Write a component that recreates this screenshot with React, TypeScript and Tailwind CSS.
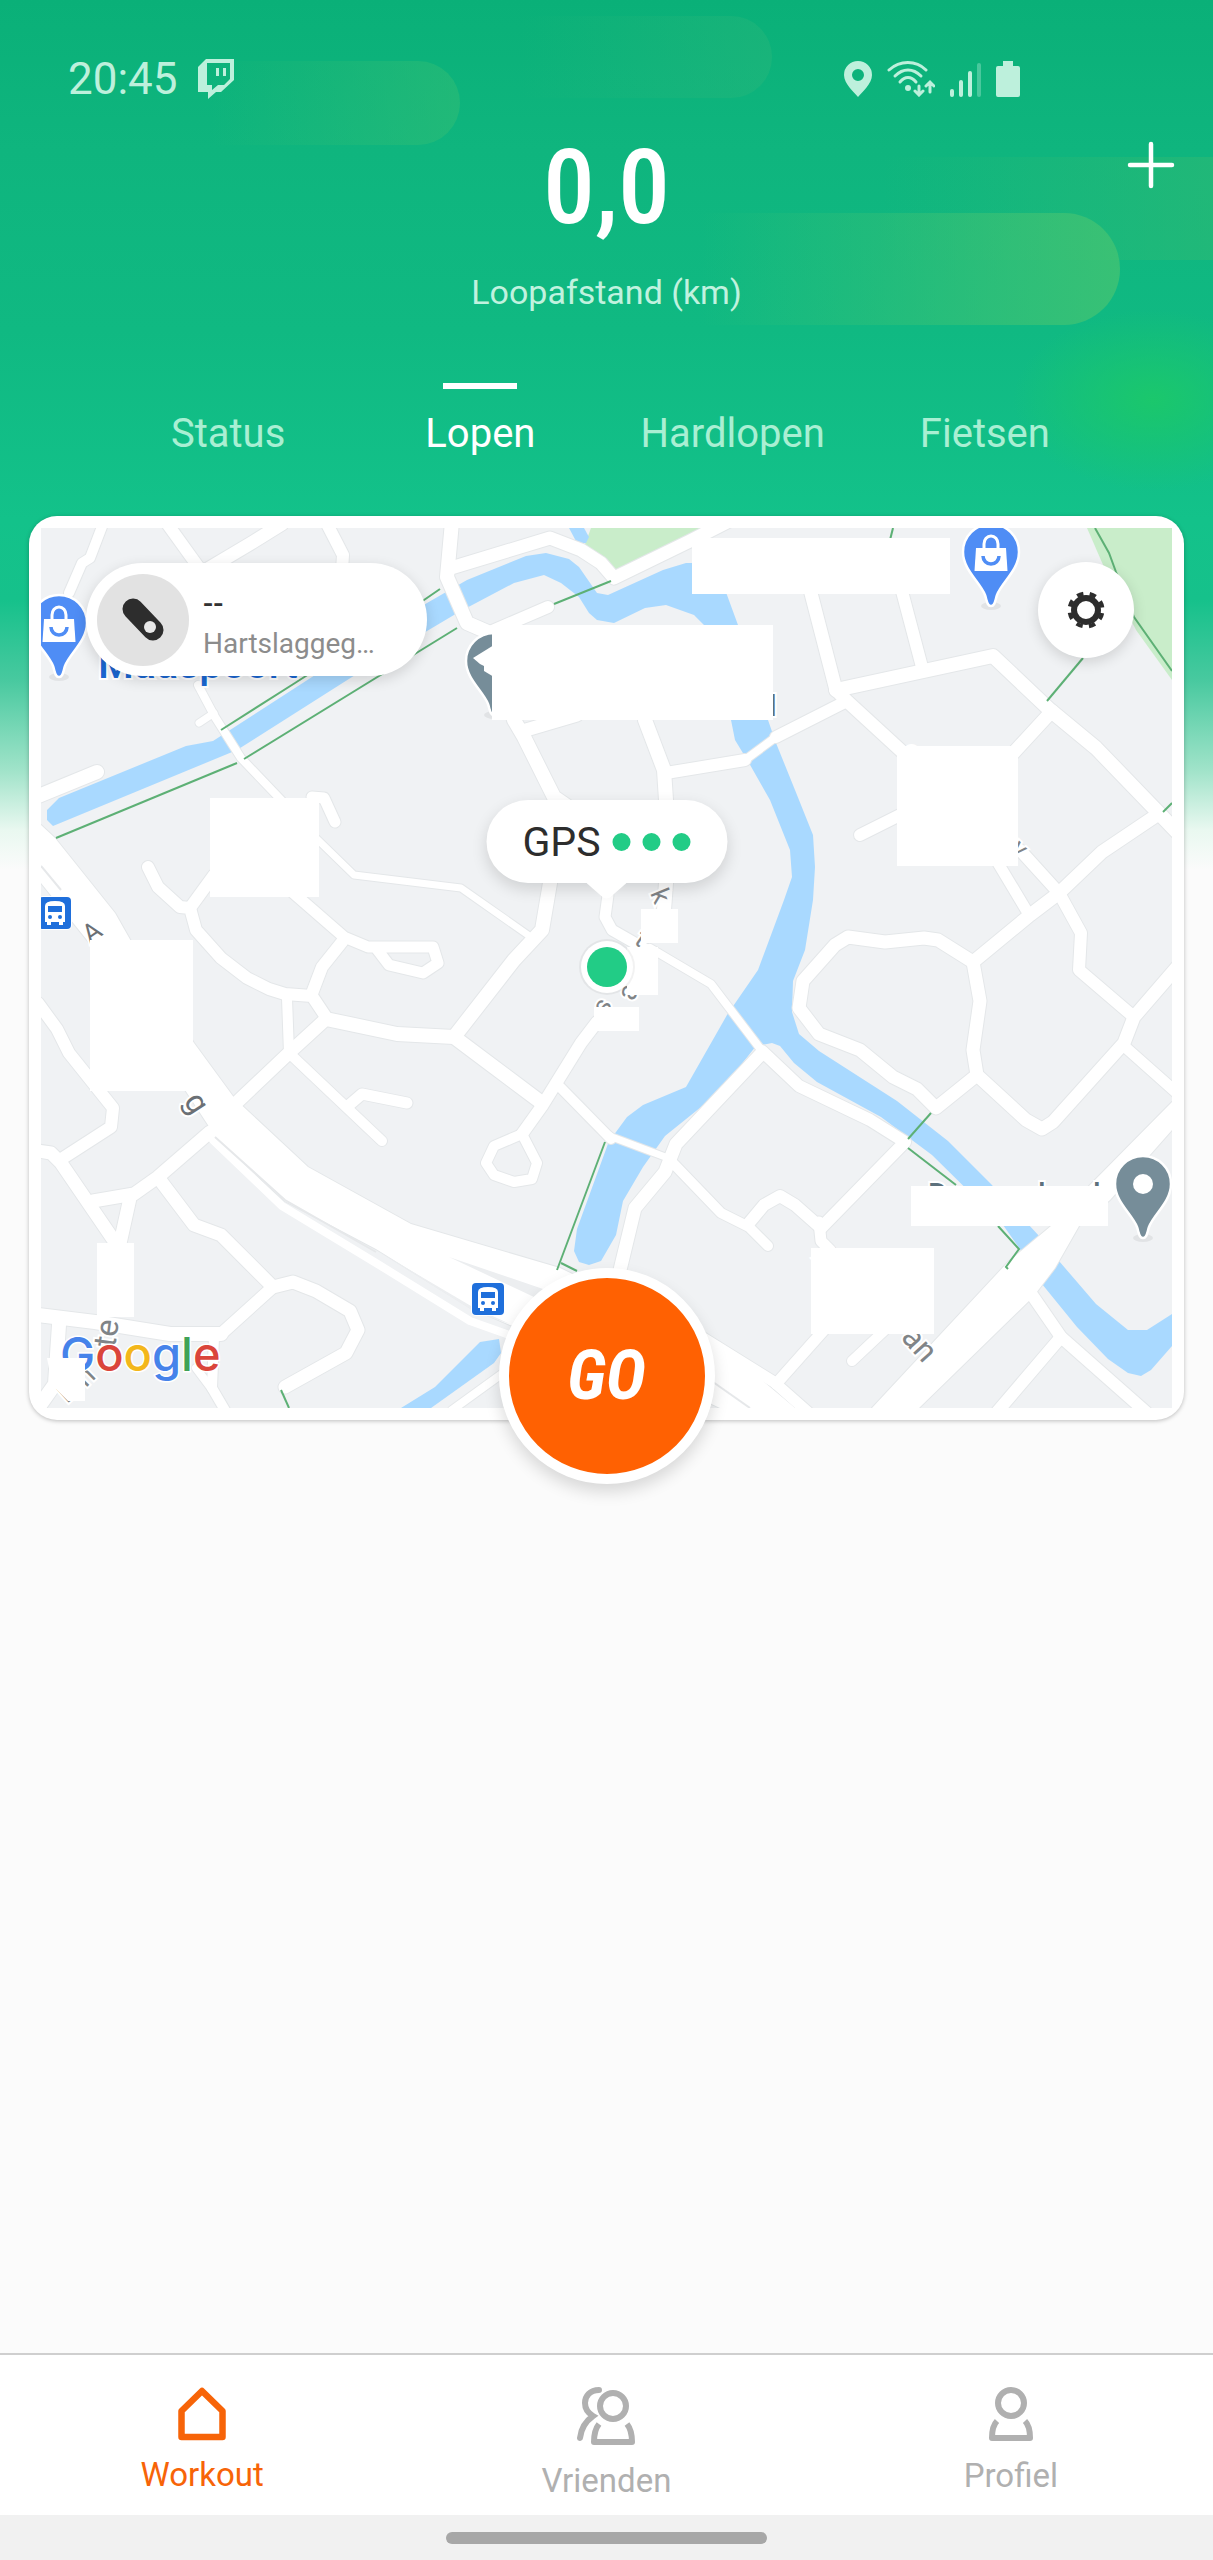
import React, { useState } from 'react'

const TABS = ['Status', 'Lopen', 'Hardlopen', 'Fietsen']

type Road = { d: string; w: number }

const WATER = [
  'M47 810L59 798L186 746L213 741L312 677L427 603L467 580L526 556L546 553L569 559L579 567L597 593L608 595L663 570L686 563L715 563L727 595L738 625L768 720L776 743L795 790L813 835L815 867L813 900L805 950L793 981L792 1012L799 1034L819 1051L897 1101L948 1141L991 1184L1040 1237L1059 1261L1096 1304L1128 1330H1147L1172 1314V1346L1151 1370L1141 1376L1128 1373L1108 1359L1077 1327L1042 1284L1020 1249L1003 1225L932 1155L881 1117L817 1082L794 1063L780 1046L772 1043L756 1046L737 1070L706 1103L665 1136L643 1167L623 1201L616 1235L601 1261L589 1265L579 1262L574 1251L577 1229L609 1141L616 1132L627 1117L643 1105L686 1087L727 1015L758 970L784 900L792 877L790 850L770 800L749 763L735 740L731 720L704 625L694 615L666 605L645 608L614 623L597 620L589 613L579 597L561 583L544 575L514 583L459 612L427 631L352 677L237 750L53 826L47 820Z',
  'M401 1408L435 1387L480 1342L499 1339L501 1353L494 1363L431 1408Z',
  'M569 528H584L589 537L586 543H577Z'
]

const PARKS = ['M591 528H717L614 573L605 560L584 547Z', 'M1087 528H1172V680L1136 630L1104 567Z']

const PATHS = [
  'M1095 528L1109 553L1116 572L1134 617L1172 671',
  'M893 528L890 540',
  'M1083 658L1047 701',
  'M1172 803L1163 812',
  'M554 604L611 581',
  'M440 589L424 600L295 683L221 730',
  'M457 628L244 759',
  'M237 763L56 838',
  'M605 1142L557 1270',
  'M561 1263L577 1271',
  'M281 1390L289 1408',
  'M931 1113L908 1139',
  'M908 1148L956 1185',
  'M998 1226L1019 1249L1006 1267L1008 1269'
]

const ROADS: Road[] = [
  { d: 'M103 524L90 558L82 563L69 593', w: 10 },
  { d: 'M166 522L202 572', w: 12 },
  { d: 'M282 524L253 542L206 570', w: 13 },
  { d: 'M326 522L343 555L342 570', w: 12 },
  { d: 'M198 685L215 717L241 758L285 804', w: 8 },
  { d: 'M199 723L214 713', w: 7 },
  { d: 'M452 522L447 577L467 623L490 633L514 720L524 737L554 797L567 806', w: 14 },
  { d: 'M550 883L542 930L514 960L454 1037', w: 14 },
  { d: 'M451 568L550 538L581 550L601 563L614 578L690 541L735 518', w: 13 },
  { d: 'M548 607L490 632', w: 12 },
  { d: 'M36 797L97 772', w: 14 },
  { d: 'M148 867L158 887L180 907L190 908L196 930L221 958L247 978L269 989L285 994L312 996L326 1017', w: 12 },
  { d: 'M190 908L214 875', w: 12 },
  { d: 'M290 890L344 937L368 947H433L438 963L423 973L389 965L376 948', w: 11 },
  { d: 'M342 942L322 967L311 996', w: 12 },
  { d: 'M316 838L354 875L461 888L528 935', w: 7 },
  { d: 'M312 797L324 798L335 822', w: 11 },
  { d: 'M526 730L577 715', w: 13 },
  { d: 'M645 720L664 770L666 800V883L664 910', w: 14 },
  { d: 'M666 773L745 760', w: 12 },
  { d: 'M745 760L776 737', w: 8 },
  { d: 'M776 737L845 702', w: 12 },
  { d: 'M805 570L836 690L848 702L909 758', w: 13 },
  { d: 'M899 580L922 667', w: 12 },
  { d: 'M836 690L993 656L1050 710L1096 748L1180 835', w: 14 },
  { d: 'M1052 711L1005 762', w: 13 },
  {
    d: 'M1157 815L1102 852L1059 893L1030 915L973 962L938 940L924 938L885 942L848 937L835 945L803 981L799 1008L819 1034L860 1050L893 1077L917 1089L936 1108L977 1075',
    w: 13
  },
  { d: 'M973 962L980 1001L973 1050L977 1075L1026 1120L1042 1129L1053 1122L1124 1043L1134 1017L1178 966', w: 13 },
  { d: 'M1134 1017L1079 970L1081 933L1059 893L1020 850', w: 12 },
  { d: 'M995 858L1028 913', w: 11 },
  { d: 'M900 815L860 835', w: 12 },
  { d: 'M1124 1046L1178 1094', w: 11 },
  { d: 'M1030 1292L1061 1337L1146 1412', w: 12 },
  { d: 'M1061 1337L997 1412', w: 12 },
  { d: 'M824 1330L776 1384', w: 11 },
  { d: 'M852 1361L885 1330', w: 10 },
  { d: 'M700 1336L774 1382L808 1412', w: 11 },
  { d: 'M762 1051L799 1086L870 1120L905 1142L821 1228L795 1205L780 1196L764 1205L749 1223', w: 12 },
  { d: 'M670 1160L721 1213L749 1227L768 1246', w: 10 },
  { d: 'M819 1222L821 1241L830 1250', w: 11 },
  { d: 'M762 1053L676 1144L665 1172L635 1208L620 1270', w: 13 },
  { d: 'M600 1129L612 1137L668 1158', w: 7 },
  { d: 'M650 948L711 984L762 1051', w: 8 },
  { d: 'M608 895L605 917L612 930L647 950', w: 11 },
  { d: 'M326 1019L397 1034L454 1037L542 1103', w: 14 },
  { d: 'M326 1019L291 1051L233 1106', w: 13 },
  { d: 'M287 998L289 1053L382 1141', w: 10 },
  { d: 'M348 1106L362 1094L407 1103', w: 11 },
  { d: 'M597 1022L581 1043L542 1106L522 1134', w: 12 },
  { d: 'M522 1134L494 1146L486 1163L494 1175L514 1182L532 1179L537 1163L522 1134', w: 10 },
  { d: 'M560 1087L611 1139', w: 10 },
  { d: 'M38 1003L57 1029L69 1053L113 1108L111 1127L63 1158', w: 12 },
  { d: 'M38 1151L51 1153L61 1163L117 1245', w: 13 },
  { d: 'M210 1132L158 1177L134 1194L93 1201', w: 13 },
  { d: 'M130 1198L119 1248', w: 13 },
  {
    d: 'M160 1180L194 1225L221 1235L273 1287L293 1282L316 1291L350 1311L358 1330L346 1353L285 1387',
    w: 13
  },
  { d: 'M273 1287L221 1334', w: 12 },
  { d: 'M38 1315L95 1322L170 1334H221', w: 14 },
  { d: 'M59 1325L55 1384L38 1408', w: 14 },
  { d: 'M214 1337L212 1388L226 1412', w: 10 },
  { d: 'M196 1368L214 1392', w: 8 },
  { d: 'M452 1410L510 1368', w: 8 }
]

const HIGHWAYS = [
  'M41 825L55 838L115 913L132 943L194 1043L235 1099L308 1167L411 1224L560 1268L720 1345L795 1408H720L640 1370L510 1325L471 1308L376 1249L285 1201L213 1136L208 1125L87 940L41 883Z',
  'M1172 1102V1130L1110 1200L1079 1226L1055 1268L1033 1297L919 1408H872L1008 1262L1051 1226L1090 1185Z'
]

// x, y, width, height of the blanked labels
const BLANKS = [
  [492, 625, 281, 95],
  [692, 538, 258, 56],
  [210, 798, 109, 99],
  [90, 940, 103, 151],
  [897, 746, 121, 120],
  [641, 909, 37, 34],
  [627, 947, 31, 48],
  [594, 1007, 45, 24],
  [97, 1243, 37, 74],
  [911, 1186, 197, 40],
  [811, 1248, 123, 86]
]

function Pin({ x, y, color, children }: { x: number; y: number; color: string; children?: React.ReactNode }) {
  return (
    <g transform={`translate(${x} ${y})`}>
      <ellipse cx="0" cy="54" rx="10" ry="4" fill="#000" opacity="0.06" />
      <path
        d="M0 54C-4 54 -4 49 -6 43C-11 30 -28 18 -28 0A28 28 0 0 1 28 0C28 18 11 30 6 43C4 49 4 54 0 54Z"
        fill={color}
        stroke="#fff"
        strokeWidth="2.5"
      />
      {children}
    </g>
  )
}

function Bag() {
  return (
    <g>
      <path d="M-15 -4H15L16.5 19H-16.5Z" fill="#fff" />
      <path d="M-7 -3V-8A7 8 0 0 1 7 -8V-3" fill="none" stroke="#fff" strokeWidth="3" />
      <path d="M-8 4A8 8 0 0 0 8 4" fill="none" stroke="#4f8df5" strokeWidth="3.5" />
    </g>
  )
}

function BusStop({ x, y }: { x: number; y: number }) {
  return (
    <g transform={`translate(${x} ${y})`}>
      <rect x="-1" y="-1" width="34" height="34" rx="5" fill="#fff" />
      <rect width="32" height="32" rx="4" fill="#1f6fdb" />
      <path d="M6 9Q6 4 16 4Q26 4 26 9V25H24V28H20V25H12V28H8V25H6Z" fill="#fff" />
      <rect x="9" y="9" width="14" height="6" fill="#1f6fdb" />
      <circle cx="11" cy="20" r="2" fill="#1f6fdb" />
      <circle cx="21" cy="20" r="2" fill="#1f6fdb" />
    </g>
  )
}

function StreetMap() {
  return (
    <svg viewBox="41 528 1131 880" className="block h-auto w-full bg-[#f0f2f4]" aria-label="Kaart" role="img">
      <g fill="#c9edca">
        {PARKS.map((d) => (
          <path key={d} d={d} />
        ))}
      </g>
      <g fill="#a9d9ff">
        {WATER.map((d) => (
          <path key={d} d={d} />
        ))}
      </g>
      <g fill="none" stroke="#e4e7e9" strokeLinecap="round" strokeLinejoin="round">
        {ROADS.map((r) => (
          <path key={r.d} d={r.d} strokeWidth={r.w + 2} />
        ))}
        {HIGHWAYS.map((d) => (
          <path key={d} d={d} strokeWidth="2" />
        ))}
      </g>
      <g fill="none" stroke="#fff" strokeLinecap="round" strokeLinejoin="round">
        {ROADS.map((r) => (
          <path key={r.d} d={r.d} strokeWidth={r.w} />
        ))}
        <path d="M213 1140L282 1206L376 1263L470 1321L512 1336" strokeWidth="8" />
      </g>
      <g fill="#fff">
        {HIGHWAYS.map((d) => (
          <path key={d} d={d} />
        ))}
      </g>
      <g fill="none" stroke="#e6e8ea" strokeWidth="2">
        <path d="M215 1137L285 1200L376 1252" />
        <path d="M41 866L61 890" />
        <path d="M713 1382L750 1408" />
      </g>
      <path d="M376 1250L471 1306L510 1324L475 1312Z" fill="#eceef0" />
      <path d="M449 1257L546 1290L534 1297Z" fill="#eceef0" />
      <g fill="none" stroke="#5db075" strokeWidth="2">
        {PATHS.map((d) => (
          <path key={d} d={d} />
        ))}
      </g>

      <g className="font-[Roboto,sans-serif]" fill="#808487" stroke="#fff" strokeWidth="4" paintOrder="stroke" fontSize="26">
        <text x="98" y="678" fontSize="41" fontWeight="500" fill="#1a67d2">
          Maaspoort
        </text>
        <text transform="translate(90 944) rotate(-35)" fill="#6b7075">A</text>
        <text transform="translate(183 1101) rotate(57)" fontSize="32" fill="#6b7075">g</text>
        <text transform="translate(904 760)">o</text>
        <text transform="translate(1009 850) rotate(45)">v</text>
        <text transform="translate(650 893) rotate(68)">k</text>
        <text transform="translate(633 943) rotate(35)">t</text>
        <text transform="translate(634 1002) rotate(-70)" fontSize="28">a</text>
        <text transform="translate(606 1016) rotate(-60)">s</text>
        <text transform="translate(812 1258) rotate(45)" fontSize="30">Ar</text>
        <text transform="translate(900 1338) rotate(48)" fontSize="32">an</text>
        <text transform="translate(115 1348) rotate(-82)" fontSize="32">te</text>
        <text transform="translate(86 1388) rotate(-45)" fontSize="28">n</text>
        <text transform="translate(67 1404) rotate(-42)" fontSize="26">E</text>
        <text x="928" y="1204" fontSize="30" fontWeight="500" fill="#5d717c">D</text>
        <text x="1038" y="1204" fontSize="30" fontWeight="500" fill="#5d717c">l</text>
        <text x="1093" y="1204" fontSize="30" fontWeight="500" fill="#5d717c">l</text>
        <text x="769" y="716" fontSize="30" fontWeight="500" fill="#5d717c">l</text>
      </g>

      <Pin x={494} y={661} color="#768d99">
        <path d="M-21 -3L0 -16V10L-14 3Z" fill="#fff" />
        <path d="M-10 10L0 16V8L-10 4Z" fill="#fff" />
      </Pin>
      <g fill="#fff">
        {BLANKS.map(([x, y, w, h]) => (
          <rect key={`${x}-${y}`} x={x} y={y} width={w} height={h} />
        ))}
      </g>
      <Pin x={59} y={623} color="#4f8df5">
        <Bag />
      </Pin>
      <Pin x={991} y={552} color="#4f8df5">
        <Bag />
      </Pin>
      <Pin x={1143} y={1184} color="#768d99">
        <circle r="10" fill="#fff" />
      </Pin>
      <BusStop x={39} y={897} />
      <BusStop x={472} y={1283} />

      <text
        x="60"
        y="1371"
        fontSize="47"
        fontWeight="500"
        stroke="#fff"
        strokeWidth="3"
        paintOrder="stroke"
        className="font-[Inter,sans-serif]"
      >
        <tspan fill="#4683ea">G</tspan>
        <tspan fill="#da453b">o</tspan>
        <tspan fill="#f3b71b">o</tspan>
        <tspan fill="#4683ea">g</tspan>
        <tspan fill="#3fa257">l</tspan>
        <tspan fill="#da453b">e</tspan>
      </text>
      <path d="M47 1358H85V1401H68L52 1385Z" fill="#fff" />

      <circle cx="607" cy="967" r="28" fill="#000" opacity="0.05" />
      <circle cx="607" cy="967" r="26" fill="#fff" />
      <circle cx="607" cy="967" r="20" fill="#22cc86" />
    </svg>
  )
}

function StatusBar() {
  return (
    <div className="flex items-center justify-between pr-[193px] pl-[68px] text-[#bdf0dc]">
      <div className="flex items-center gap-5">
        <span className="text-[44px] leading-[54px]">20:45</span>
        <svg className="h-10 w-9" viewBox="0 0 36 40" fill="currentColor">
          <path
            fillRule="evenodd"
            d="M8 0H36V21L23 33H18L10 40V33H0V8ZM9 4V26H14V31L20 26H26L32 20V4Z"
          />
          <path d="M18 9H21V17H18ZM25 9H28V17H25Z" />
        </svg>
      </div>
      <div className="flex items-center gap-[15px]">
        <svg className="h-9 w-7" viewBox="0 0 28 36" fill="currentColor">
          <path fillRule="evenodd" d="M14 0A14 14 0 0 1 28 14C28 23 18 31 14 36C10 31 0 23 0 14A14 14 0 0 1 14 0ZM14 8A6 6 0 1 0 14 20A6 6 0 1 0 14 8Z" />
        </svg>
        <svg className="h-9 w-12" viewBox="0 0 48 36" fill="none" stroke="currentColor" strokeWidth="3" strokeLinecap="round">
          <path d="M2 9C13 -1 29 -1 39 9" />
          <path d="M8 15C16 7 26 7 34 15" />
          <path d="M13 21C18 15 24 15 29 21" />
          <circle cx="21" cy="27" r="3" fill="currentColor" stroke="none" />
          <path d="M32 25V33M28 30L32 34L36 30M43 31V22M39 25L43 21L47 25" />
        </svg>
        <svg className="h-9 w-[31px]" viewBox="0 0 31 36" fill="currentColor">
          <rect x="0" y="28" width="4" height="8" rx="2" />
          <rect x="9" y="19" width="4" height="17" rx="2" />
          <rect x="18" y="10" width="4" height="26" rx="2" />
          <rect x="27" y="2" width="4" height="34" rx="2" opacity="0.35" />
        </svg>
        <svg className="h-9 w-6" viewBox="0 0 24 36" fill="currentColor">
          <path d="M7 0H17V5H22Q24 5 24 7V34Q24 36 22 36H2Q0 36 0 34V7Q0 5 2 5H7Z" />
        </svg>
      </div>
    </div>
  )
}

function HouseIcon() {
  return (
    <svg className="h-[54px] w-12" viewBox="0 0 48 54" fill="none" stroke="currentColor" strokeWidth="6.5" strokeLinejoin="round">
      <path d="M24 4L44.5 24V50H3.5V24Z" />
    </svg>
  )
}

function FriendsIcon() {
  return (
    <svg className="h-[60px] w-[58px]" viewBox="0 0 58 60" fill="none" stroke="currentColor" strokeWidth="6" strokeLinecap="round">
      <circle cx="36" cy="19" r="13" />
      <path d="M22 3C13 3 8 9 8 16C8 22 11 26 16 29C9 34 4 42 3 51" />
      <path d="M22 37C18 42 17 48 17 55H55C55 48 54 42 50 37" strokeLinecap="butt" strokeLinejoin="round" />
    </svg>
  )
}

function ProfileIcon() {
  return (
    <svg className="h-[55px] w-[46px]" viewBox="0 0 46 55" fill="none" stroke="currentColor" strokeWidth="6" strokeLinejoin="round">
      <circle cx="23" cy="16" r="13" />
      <path d="M9 34C5 38 4 44 4 51H42C42 44 41 38 37 34" />
    </svg>
  )
}

const NAV = [
  { label: 'Workout', icon: <HouseIcon />, active: true },
  { label: 'Vrienden', icon: <FriendsIcon />, active: false },
  { label: 'Profiel', icon: <ProfileIcon />, active: false }
]

function Backdrop() {
  return (
    <div className="absolute inset-x-0 top-0 h-[870px] overflow-hidden bg-[linear-gradient(to_bottom,#0ab078_0px,#0fb57e_150px,#10b982_330px,#13c28a_520px,#16c18b_600px,#48c99f_680px,#a0e3c9_770px,#e9f8f0_830px,#fbfbfb_870px)]">
      <div className="absolute top-[61px] left-[210px] h-[84px] w-[250px] rounded-r-full bg-linear-to-r from-transparent to-[#34be74]/50" />
      <div className="absolute top-4 left-[520px] h-[82px] w-[252px] rounded-r-full bg-linear-to-r from-transparent to-[#2cb77a]/40" />
      <div className="absolute top-[157px] right-0 h-[103px] w-[330px] bg-linear-to-r from-transparent to-[#2cb974]/60" />
      <div className="absolute top-[213px] right-[93px] h-[112px] w-[420px] rounded-r-full bg-linear-to-r from-transparent to-[#42c373]/80" />
      <div className="absolute -right-20 top-[310px] h-[180px] w-[280px] bg-[radial-gradient(closest-side,#1bc76c,transparent)]" />
    </div>
  )
}

export default function App() {
  const [tab, setTab] = useState('Lopen')

  return (
    <div className="relative flex min-h-screen flex-col bg-[#fbfbfb] font-[Roboto,sans-serif]">
      <Backdrop />

      <header className="relative pt-[52px] text-white">
        <StatusBar />
        <button type="button" aria-label="Toevoegen" className="absolute top-[141px] right-[38px]">
          <svg className="size-12" viewBox="0 0 48 48" stroke="currentColor" strokeWidth="4.5" strokeLinecap="round">
            <path d="M24 3V45M3 24H45" />
          </svg>
        </button>
        <div className="mt-[22px] flex flex-col items-center">
          <div className="font-['Roboto_Condensed','Liberation_Sans_Narrow',Roboto,sans-serif] text-[104px] leading-[120px] font-medium">
            0,0
          </div>
          <div className="mt-6 text-[34px] leading-10 text-[#c0f2df]">Loopafstand (km)</div>
        </div>
        <nav className="mx-[102px] mt-[71px] grid grid-cols-4">
          {TABS.map((name) => (
            <button
              key={name}
              type="button"
              onClick={() => setTab(name)}
              className={`flex flex-col items-center gap-[22px] text-[40px] leading-[46px] ${
                name === tab ? 'text-white' : 'text-[#a9efd3]'
              }`}
            >
              <span className={`h-[6px] w-[74px] ${name === tab ? 'bg-white' : 'bg-transparent'}`} />
              {name}
            </button>
          ))}
        </nav>
      </header>

      <main className="relative mt-[59px] grow px-[29px]">
        <section className="relative rounded-[28px] bg-white p-3 shadow-[0_1px_4px_rgba(0,0,0,0.25)]">
          <StreetMap />

          <button
            type="button"
            className="absolute top-[47px] left-[57px] flex h-[113px] w-[341px] items-center gap-[14px] rounded-full bg-white pl-[11px] text-left shadow-[0_4px_14px_rgba(0,0,0,0.14)]"
          >
            <span className="flex size-[92px] items-center justify-center rounded-full bg-[#e2e2e2]">
              <svg className="size-12" viewBox="0 0 48 48">
                <path d="M14 13L34 34" stroke="#2d2d2d" strokeWidth="21" strokeLinecap="round" />
                <circle cx="31" cy="31" r="6" fill="#e8e8e8" />
              </svg>
            </span>
            <span className="flex flex-col gap-2 pt-2">
              <span className="text-[30px] leading-8 font-medium text-[#333]">--</span>
              <span className="text-[28px] leading-8 text-[#8c8c8c]">Hartslaggeg…</span>
            </span>
          </button>

          <button
            type="button"
            aria-label="Instellingen"
            className="absolute top-[46px] right-[50px] flex size-24 items-center justify-center rounded-full bg-white shadow-[0_4px_14px_rgba(0,0,0,0.14)]"
          >
            <svg className="size-10" viewBox="0 0 40 40" fill="none" stroke="#2d2d2d">
              <circle cx="20" cy="20" r="12" strokeWidth="6" />
              <circle cx="20" cy="20" r="16.5" strokeWidth="4" strokeDasharray="6.5 6.46" strokeDashoffset="9.7" />
            </svg>
          </button>

          <div className="absolute top-[284px] left-1/2 flex h-[83px] w-[241px] -translate-x-1/2 items-center justify-center gap-3 rounded-full bg-white shadow-[0_6px_16px_rgba(0,0,0,0.14)]">
            <span className="text-[41px] leading-[48px] text-[#2d2d2d]">GPS</span>
            <span className="size-[18px] rounded-full bg-[#22cc86]" />
            <span className="size-[18px] rounded-full bg-[#22cc86]" />
            <span className="size-[18px] rounded-full bg-[#22cc86]" />
            <svg className="absolute top-full left-1/2 h-4 w-10 -translate-x-1/2" viewBox="0 0 40 16" fill="#fff">
              <path d="M0 0H40L24 14Q20 17 16 14Z" />
            </svg>
          </div>

          <button
            type="button"
            className="absolute -bottom-16 left-1/2 flex size-[216px] -translate-x-1/2 items-center justify-center rounded-full border-10 border-white bg-[#ff6102] font-['Roboto_Condensed','Liberation_Sans_Narrow',Roboto,sans-serif] text-[68px] leading-[80px] font-bold text-white italic shadow-[0_8px_16px_rgba(0,0,0,0.14)]"
          >
            GO
          </button>
        </section>
      </main>

      <footer className="relative">
        <nav className="grid h-[162px] grid-cols-3 border-t-2 border-[#cfcfcf] bg-white pt-8">
          {NAV.map((item) => (
            <a
              key={item.label}
              href="#"
              className={`flex flex-col items-center gap-[14px] text-[33px] leading-10 ${
                item.active ? 'text-[#f76408]' : 'text-[#b0b0b0]'
              }`}
            >
              {item.icon}
              {item.label}
            </a>
          ))}
        </nav>
        <div className="flex h-[45px] items-center justify-center bg-[#f1f1f1]">
          <div className="h-3 w-[321px] rounded-full bg-[#a7a7a7]" />
        </div>
      </footer>
    </div>
  )
}
